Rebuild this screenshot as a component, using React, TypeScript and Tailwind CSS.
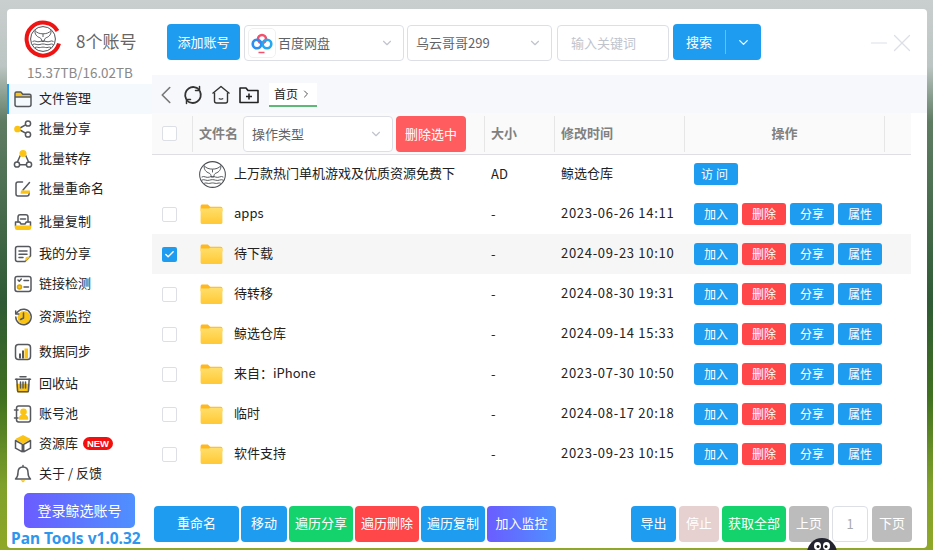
import type { ReactNode } from 'react';
import { ChevronDown, ChevronLeft, ChevronRight, X, Minus, Check } from 'lucide-react';

const font = 'font-["Noto_Sans_CJK_SC","Liberation_Sans",sans-serif]';
const S = '#55585c';
const Y = '#fbc415';

function WhaleMark({ className }: { className?: string }) {
  return (
    <svg viewBox="0 0 26 26" className={className} fill="none" stroke="#4c4f53" strokeWidth="0.9">
      <circle cx="13" cy="13" r="12.4" strokeWidth="1" />
      <path d="M5 4.500c2 2.600 5 3.300 8 3.300s6-.7 8-3.300c.5 3.500-1.800 6.300-4.800 7.200-1.300.5-1.900 1.900-2 3.800h-2.400c-.1-1.900-.7-3.300-2-3.800C6.800 10.800 4.500 8 5 4.500z" fill="#fff" />
      <path d="M13 8v3M2.500 15.500c2.500-1.700 4.500 1.200 7.500 0 2-.8 4-.8 6 0 3 1.200 5-1.700 7.500 0M2.500 18.500c2.500-1.500 4.500 1 7.500 0 2-.7 4-.7 6 0 3 1 5-1.500 7.500 0M5 21.500c2-1 3.500.6 5.500 0 1.700-.5 3.300-.5 5 0 2 .6 3.500-1 5.500 0" />
    </svg>
  );
}

function Logo() {
  return (
    <div className="relative h-[38px] w-[38px]">
      <svg viewBox="0 0 38 38" className="h-full w-full" fill="none">
        <path d="M35 23.500A16.500 16.500 0 1 1 33.500 11" stroke="#ee1414" strokeWidth="4" />
      </svg>
      <div className="absolute left-[6px] top-[6px] h-[26px] w-[26px]">
        <WhaleMark className="h-full w-full" />
      </div>
    </div>
  );
}

function Ic({ children }: { children: ReactNode }) {
  return (
    <svg viewBox="0 0 20 20" className="h-[20px] w-[20px] shrink-0" fill="none" stroke={S} strokeWidth="1.500" strokeLinejoin="round" strokeLinecap="round">
      {children}
    </svg>
  );
}

const icons: Record<string, ReactNode> = {
  folder: (
    <Ic>
      <path d="M2.500 7.500V4.300C2.500 3.500 3 3 3.800 3h4l2 2.300h6.700c.9 0 1.500.6 1.500 1.500v1z" fill={Y} stroke="none" />
      <path d="M2 15.500V4.500C2 3.600 2.600 3 3.500 3h4.300l2 2.300h6.700c.9 0 1.500.6 1.500 1.500v8.700c0 1.200-.8 2-2 2H4c-1.200 0-2-.8-2-2zM2 8h16" />
    </Ic>
  ),
  share: (
    <Ic>
      <path d="M7 9l5.600-3.200M7 11l5.600 3.200" />
      <circle cx="4.500" cy="10" r="2.600" fill={Y} stroke={Y} />
      <circle cx="15" cy="4.500" r="2.600" />
      <circle cx="15" cy="15.500" r="2.600" />
    </Ic>
  ),
  transfer: (
    <Ic>
      <path d="M6.800 15.800h6.400M7.300 6.500 4.500 12.800M12.700 6.500l2.800 6.300" />
      <circle cx="10" cy="4.500" r="2.800" fill={Y} stroke={Y} />
      <circle cx="4" cy="15.500" r="2.600" />
      <circle cx="16" cy="15.500" r="2.600" />
    </Ic>
  ),
  rename: (
    <Ic>
      <path d="M9.500 3H5C3.800 3 3 3.800 3 5v10c0 1.200.8 2 2 2h9c1.200 0 2-.8 2-2v-2" />
      <path d="M16.500 3.500 10 11" />
      <path d="M8 11.500h9v1c0 1.500-1 2.300-2.300 2.300H7.500c.3-1.200.3-2.300.5-3.300z" fill={Y} stroke="none" />
    </Ic>
  ),
  copy: (
    <Ic>
      <path d="M5 10V5c0-1.300.9-2.200 2.200-2.200h5.600C14.100 2.800 15 3.700 15 5v5" />
      <path d="M7.500 7h5" />
      <path d="M2.500 14v-4h4.200l1.300 2h4l1.300-2h4.200v4" />
      <path d="M2.500 14.300h15v1.400c0 1-.7 1.600-1.600 1.600H4.100c-.9 0-1.600-.6-1.600-1.600z" fill={Y} stroke={Y} />
    </Ic>
  ),
  myshare: (
    <Ic>
      <path d="M17.500 12V4.500C17.500 3.200 16.700 2.500 15.500 2.500h-11c-1.200 0-2 .7-2 2v11c0 1.300.8 2 2 2H12z" />
      <path d="M6 7h8M6 10.200h8M6 13.400h4" />
      <path d="M12.500 17.500v-3c0-1 .6-1.700 1.700-1.700h3.300z" fill={Y} stroke="none" />
    </Ic>
  ),
  link: (
    <Ic>
      <rect x="2" y="2.500" width="16" height="15" rx="2.200" />
      <path d="m5 6 1.300 1.300L8.300 5M11 6.500h4.500M11 13h4.500" />
      <circle cx="6.500" cy="13" r="2" fill={Y} stroke="#d8a500" />
    </Ic>
  ),
  monitor: (
    <Ic>
      <circle cx="11" cy="10.500" r="6.500" fill={Y} stroke="none" />
      <path d="M2.800 10a7.700 7.700 0 1 0 2.300-5.500L3 6.500" />
      <path d="M2.700 4v3h3" />
      <path d="M10.500 6v5l-3 1.500" />
    </Ic>
  ),
  sync: (
    <Ic>
      <rect x="2.500" y="2.500" width="15" height="15" rx="3" />
      <path d="M6 11.500h2v5H6zM9 8.500h2v8H9z" fill={S} stroke="none" />
      <path d="M11.500 6.500h3.500v10h-3.500z" fill={Y} stroke="none" />
    </Ic>
  ),
  trash: (
    <Ic>
      <path d="M7 2.800h6M2.500 5.300h15" />
      <path d="M4 10.500h12l-.6 6.500c0 .5-.5.800-1 .8H5.600c-.5 0-1-.3-1-.8z" fill={Y} stroke={Y} />
      <path d="M3.800 5.300l.8 11.700c0 .5.500.8 1 .8h8.800c.5 0 1-.3 1-.8l.8-11.700M7.500 8v6M12.500 8v6M10 8v6" />
    </Ic>
  ),
  pool: (
    <Ic>
      <rect x="3.500" y="2" width="14" height="16" rx="2.200" />
      <path d="M1.500 6h3.500M1.500 14h3.500" />
      <circle cx="10.500" cy="7.800" r="2.600" fill={Y} stroke={Y} />
      <path d="M6.500 15c0-2.500 1.800-3.700 4-3.700s4 1.200 4 3.700z" fill={Y} stroke={Y} />
    </Ic>
  ),
  res: (
    <Ic>
      <path d="M10 1.800 16.500 5.200 10 8.800 3.500 5.200z" fill={Y} stroke={Y} />
      <path d="M2.500 6.500 9.300 10.300v7.500L2.500 14.200zM17.500 6.500l-6.800 3.800v7.500l6.800-3.600z" />
    </Ic>
  ),
  bell: (
    <Ic>
      <path d="M10 1.500v1.500M10 3c3.500 0 5 2.600 5 5.500 0 3.200.8 5 2.500 6.500h-15C4.200 13.500 5 11.700 5 8.500 5 5.600 6.500 3 10 3z" />
      <path d="M7.500 16.300h5L10 18.500z" fill={Y} stroke="none" />
    </Ic>
  ),
};

const menu: { key: string; label: string; gap: string; badge?: boolean; active?: boolean }[] = [
  { key: 'folder', label: '文件管理', gap: 'mt-0', active: true },
  { key: 'share', label: '批量分享', gap: 'mt-0' },
  { key: 'transfer', label: '批量转存', gap: 'mt-0' },
  { key: 'rename', label: '批量重命名', gap: 'mt-0' },
  { key: 'copy', label: '批量复制', gap: 'mt-[3px]' },
  { key: 'myshare', label: '我的分享', gap: 'mt-[2px]' },
  { key: 'link', label: '链接检测', gap: 'mt-0' },
  { key: 'monitor', label: '资源监控', gap: 'mt-[3px]' },
  { key: 'sync', label: '数据同步', gap: 'mt-[5px]' },
  { key: 'trash', label: '回收站', gap: 'mt-[2px]' },
  { key: 'pool', label: '账号池', gap: 'mt-0' },
  { key: 'res', label: '资源库', gap: 'mt-0', badge: true },
  { key: 'bell', label: '关于 / 反馈', gap: 'mt-0' },
];

const rows = [
  { name: 'apps', time: '2023-06-26 14:11' },
  { name: '待下载', time: '2024-09-23 10:10', checked: true },
  { name: '待转移', time: '2024-08-30 19:31' },
  { name: '鲸选仓库', time: '2024-09-14 15:33' },
  { name: '来自：iPhone', time: '2023-07-30 10:50' },
  { name: '临时', time: '2024-08-17 20:18' },
  { name: '软件支持', time: '2023-09-23 10:15' },
];

function Sidebar() {
  return (
    <aside className="flex w-[145px] shrink-0 flex-col">
      <div className="flex h-[52px] items-center pl-[17px] pt-[10px]">
        <Logo />
        <span className="ml-[14px] mt-[3px] text-[17px] text-[#666]">8个账号</span>
      </div>
      <div className="mt-[4px] pl-[20px] text-[13.400px] leading-[18px] text-[#888]">15.37TB/16.02TB</div>
      <nav className="mt-[3px] flex flex-col">
        {menu.map((m) => (
          <div
            key={m.key}
            className={`flex h-[30px] items-center gap-[6px] pl-[4px] text-[13px] text-[#222] ${m.gap} ${m.active ? 'border-l-2 border-[#1e9cf0] bg-[#f4f9fe]' : 'border-l-2 border-transparent'}`}
          >
            {icons[m.key]}
            <span className="pb-[2px]">{m.label}</span>
            {m.badge && (
              <span className='-ml-[1px] flex h-[13px] w-[30px] items-center justify-center rounded-full bg-[#f40f0f] font-["Liberation_Sans"] text-[9.500px] font-bold text-white'>
                NEW
              </span>
            )}
          </div>
        ))}
      </nav>
      <div className="mx-[17px] mt-[4px] flex h-[37px] items-center justify-center rounded-[5px] bg-[linear-gradient(90deg,#6b5cff,#4f90ff)] text-[14px] text-white">
        登录鲸选账号
      </div>
      <div className='pl-[4px] font-["Noto_Sans"] text-[15.500px] leading-[20px] font-bold whitespace-nowrap text-[#2f96ee]'>
        Pan Tools v1.0.32
      </div>
    </aside>
  );
}

function Btn({ className, children }: { className: string; children: ReactNode }) {
  return <div className={`flex h-[36px] items-center justify-center rounded-[4px] pb-[2px] text-[13px] text-white ${className}`}>{children}</div>;
}

function Mini({ className, children }: { className: string; children: ReactNode }) {
  return <div className={`flex h-[22px] items-center justify-center rounded-[3px] text-[12px] text-white ${className}`}>{children}</div>;
}

function Checkbox({ checked }: { checked?: boolean }) {
  return checked ? (
    <div className="flex h-[15px] w-[15px] items-center justify-center rounded-[2px] bg-[#1e9cf0]">
      <Check className="h-[11px] w-[11px] text-white" strokeWidth={3} />
    </div>
  ) : (
    <div className="h-[15px] w-[15px] rounded-[2px] border border-[#dcdfe6] bg-white" />
  );
}

function FolderIcon() {
  return (
    <svg viewBox="0 0 24 22" className="h-[20px] w-[23px]">
      <defs>
        <linearGradient id="fold" x1="0" y1="0" x2="0" y2="1">
          <stop offset="0" stopColor="#ffdf6d" />
          <stop offset="1" stopColor="#ffc933" />
        </linearGradient>
      </defs>
      <path d="M0 2.500C0 1.200.8.500 2 .5h6l2.500 2.500H22c1.200 0 2 .8 2 2v3H0z" fill="#ffb81f" />
      <path d="M0 5h9l2-1h11c1.200 0 2 .8 2 2v14c0 1.200-.8 2-2 2H2c-1.200 0-2-.8-2-2z" fill="url(#fold)" />
    </svg>
  );
}

function Select({ className, children }: { className: string; children: ReactNode }) {
  return (
    <div className={`flex items-center justify-between rounded-[4px] border border-[#dcdfe6] bg-white text-[13px] text-[#606266] ${className}`}>
      {children}
      <ChevronDown className="mr-[9px] h-[14px] w-[14px] text-[#c0c4cc]" />
    </div>
  );
}

function Header() {
  return (
    <header className="flex h-[66px] shrink-0 items-center pl-[15px] pt-[2px]">
      <div className="-mt-[2px] flex h-[36px] w-[73px] items-center justify-center rounded-[4px] bg-[#1e9cf0] text-[13px] text-white">添加账号</div>
      <Select className="ml-[4px] h-[36px] w-[160px]">
        <div className="flex items-center">
          <div className="ml-[3px] flex h-[30px] w-[28px] items-center justify-center rounded-[5px] border border-[#f0f0f0]">
            <svg viewBox="0 0 24 24" className="h-[24px] w-[24px]" fill="none" strokeWidth="2.600">
              <circle cx="12" cy="8" r="4" stroke="#f4506a" />
              <circle cx="7" cy="13" r="4.300" stroke="#2c8df2" />
              <circle cx="17" cy="13" r="4.300" stroke="#24a8f0" />
              <path d="M8.500 21.500h6" stroke="#f4506a" strokeWidth="1.500" />
            </svg>
          </div>
          <span className="ml-[2px]">百度网盘</span>
        </div>
      </Select>
      <Select className="ml-[3px] h-[36px] w-[145px] pl-[8px]">
        <span>乌云哥哥299</span>
      </Select>
      <div className="ml-[5px] flex h-[36px] w-[112px] items-center rounded-[4px] border border-[#dcdfe6] bg-white pl-[13px] text-[13px] text-[#c0c4cc]">输入关键词</div>
      <div className="ml-[4px] -mt-[2px] flex h-[36px] w-[88px] items-center rounded-[4px] bg-[#1e9cf0] text-[13px] text-white">
        <span className="w-[52px] text-center">搜索</span>
        <span className="h-[24px] w-px bg-[#6cbdf5]" />
        <ChevronDown className="ml-[10px] h-[15px] w-[15px]" />
      </div>
      <Minus className="ml-[105px] h-[26px] w-[26px] text-[#dcdfe6]" strokeWidth={1} />
      <X className="-ml-[5px] h-[30px] w-[30px] text-[#dcdfe6]" strokeWidth={1} />
    </header>
  );
}

function Toolbar() {
  return (
    <div className="flex h-[38px] shrink-0 items-center bg-[#f7f8fb] pt-[2px]">
      <ChevronLeft className="-ml-[1px] h-[30px] w-[30px] text-[#777]" strokeWidth={1.300} />
      <svg viewBox="0 0 20 20" className="ml-[2px] h-[20px] w-[20px]" fill="none" stroke="#333" strokeWidth="1.800" strokeLinecap="round">
        <path d="M3 13.500A8 8 0 0 1 16 4.500" />
        <path d="M17 6.500A8 8 0 0 1 4 15.500" />
        <path d="M16.500 1.500v4h-4M3.500 18.500v-4h4" strokeWidth="1.500" />
      </svg>
      <svg viewBox="0 0 20 20" className="ml-[8px] h-[20px] w-[20px]" fill="none" stroke="#333" strokeWidth="1.400" strokeLinejoin="round">
        <path d="M1.500 8.500 10 1.500l8.500 7" />
        <path d="M3.500 7.500V16c0 1.200.7 2 2 2h9c1.300 0 2-.8 2-2V7.500" />
        <path d="M7.800 13.500c1.400.8 3 .8 4.400 0" />
      </svg>
      <svg viewBox="0 0 20 20" className="ml-[8px] h-[20px] w-[20px]" fill="none" stroke="#222" strokeWidth="1.600" strokeLinejoin="round">
        <path d="M1 3h6l2 2.500h10v12H1z" />
        <path d="M10 8.500v6M7 11.500h6" />
      </svg>
      <div className="ml-[10px] flex h-[24px] w-[48px] items-center justify-center gap-[2px] border-b-2 border-[#5fb878] bg-white text-[12px] text-[#222]">
        首页
        <ChevronRight className="h-[12px] w-[12px] text-[#555]" />
      </div>
    </div>
  );
}

function ColLine() {
  return <span className="h-[36px] w-px shrink-0 bg-[#e6e6e6]" />;
}

function TableHead() {
  return (
    <div className="flex h-[42px] w-[759px] items-center border-b border-[#dfdfe3] bg-[#fafafa] text-[13px] font-bold text-[#808080]">
      <div className="flex w-[40px] justify-start pl-[10px]">
        <Checkbox />
      </div>
      <ColLine />
      <span className="ml-[6px] w-[44px] pb-[2px]">文件名</span>
      <Select className="h-[36px] w-[150px] pl-[8px] font-normal">
        <span>操作类型</span>
      </Select>
      <div className="ml-[3px] flex h-[36px] w-[70px] items-center justify-center rounded-[4px] bg-[#ff5c5f] font-normal text-white">删除选中</div>
      <span className="ml-[18px]" />
      <ColLine />
      <span className="w-[69px] pb-[2px] pl-[6px]">大小</span>
      <ColLine />
      <span className="w-[129px] pb-[2px] pl-[6px]">修改时间</span>
      <ColLine />
      <span className="w-[199px] pb-[2px] text-center">操作</span>
      <ColLine />
    </div>
  );
}

function Row({ name, time, checked }: { name: string; time: string; checked?: boolean }) {
  return (
    <div className={`flex h-[40px] w-[759px] items-center text-[13px] text-[#222] ${checked ? 'bg-[#f6f6f6]' : ''}`}>
      <div className="w-[48px] pl-[10px]">
        <Checkbox checked={checked} />
      </div>
      <FolderIcon />
      <span className="ml-[11px] w-[257px] pb-[2px]">{name}</span>
      <span className="w-[70px]">-</span>
      <span className="w-[133px] pb-[2px] tracking-[0.700px]">{time}</span>
      <div className="flex gap-[4px]">
        <Mini className="w-[44px] bg-[#1e9cf0]">加入</Mini>
        <Mini className="w-[44px] bg-[#ff474a]">删除</Mini>
        <Mini className="w-[44px] bg-[#1e9cf0]">分享</Mini>
        <Mini className="w-[44px] bg-[#1e9cf0]">属性</Mini>
      </div>
    </div>
  );
}

function AdRow() {
  return (
    <div className="flex h-[39px] w-[759px] items-center pb-[1px] text-[13px] text-[#222]">
      <div className="w-[47px]" />
      <WhaleMark className="h-[27px] w-[27px]" />
      <span className="ml-[8px] w-[257px] pb-[2px]">上万款热门单机游戏及优质资源免费下</span>
      <span className="w-[70px]">AD</span>
      <span className="w-[133px] pb-[2px]">鲸选仓库</span>
      <Mini className="w-[44px] bg-[#1e9cf0] tracking-[3px]">访问</Mini>
    </div>
  );
}

function Footer() {
  return (
    <footer className="flex h-[36px] w-[760px] shrink-0 items-center">
      <div className="ml-[2px] flex gap-[2px]">
        <Btn className="w-[85px] bg-[#1e9cf0]">重命名</Btn>
        <Btn className="w-[46px] bg-[#1e9cf0]">移动</Btn>
        <Btn className="w-[64px] bg-[#14d26c]">遍历分享</Btn>
        <Btn className="w-[64px] bg-[#ff474a]">遍历删除</Btn>
        <Btn className="w-[64px] bg-[#1e9cf0]">遍历复制</Btn>
        <Btn className="w-[69px] bg-[linear-gradient(90deg,#6b5cff,#4f90ff)]">加入监控</Btn>
      </div>
      <div className="ml-auto flex gap-[3px]">
        <Btn className="w-[45px] bg-[#1e9cf0]">导出</Btn>
        <Btn className="w-[40px] bg-[#e6d0d0]">停止</Btn>
        <Btn className="w-[64px] bg-[#14d26c]">获取全部</Btn>
        <Btn className="w-[40px] bg-[#bcbcbc]">上页</Btn>
        <div className="flex h-[36px] w-[36px] items-center justify-center rounded-[4px] border border-[#dcdfe6] bg-white text-[13px] text-[#aaa]">1</div>
        <Btn className="ml-[1px] w-[40px] bg-[#bcbcbc]">下页</Btn>
      </div>
    </footer>
  );
}

export default function App() {
  return (
    <div
      className={`relative h-[550px] w-[933px] overflow-hidden bg-[linear-gradient(180deg,#c9cfce_0%,#bcc5c3_12%,#5f7c63_22%,#2f5a35_55%,#3f7020_72%,#7fa02a_88%,#8fa828_100%)] pl-[7px] pt-[9px] ${font}`}
    >
      <div className="flex h-[539px] w-[920px] overflow-hidden rounded-[4px] bg-white">
        <Sidebar />
        <main className="flex min-w-0 flex-1 flex-col">
          <Header />
          <Toolbar />
          <TableHead />
          <AdRow />
          {rows.map((r) => (
            <Row key={r.name} {...r} />
          ))}
          <div className="flex-1" />
          <Footer />
          <div className="h-[6px] shrink-0" />
        </main>
      </div>
      {/* the little mascot peeking in under the window */}
      <svg viewBox="0 0 30 30" className="absolute left-[807px] top-[538px] h-[30px] w-[30px]">
        <circle cx="15" cy="15" r="15" fill="#23232f" />
        <ellipse cx="10.500" cy="8" rx="3.500" ry="4" fill="#fff" />
        <ellipse cx="19.500" cy="8" rx="3.500" ry="4" fill="#fff" />
        <circle cx="11" cy="8.500" r="1.500" fill="#111" />
        <circle cx="19" cy="8.500" r="1.500" fill="#111" />
      </svg>
    </div>
  );
}
